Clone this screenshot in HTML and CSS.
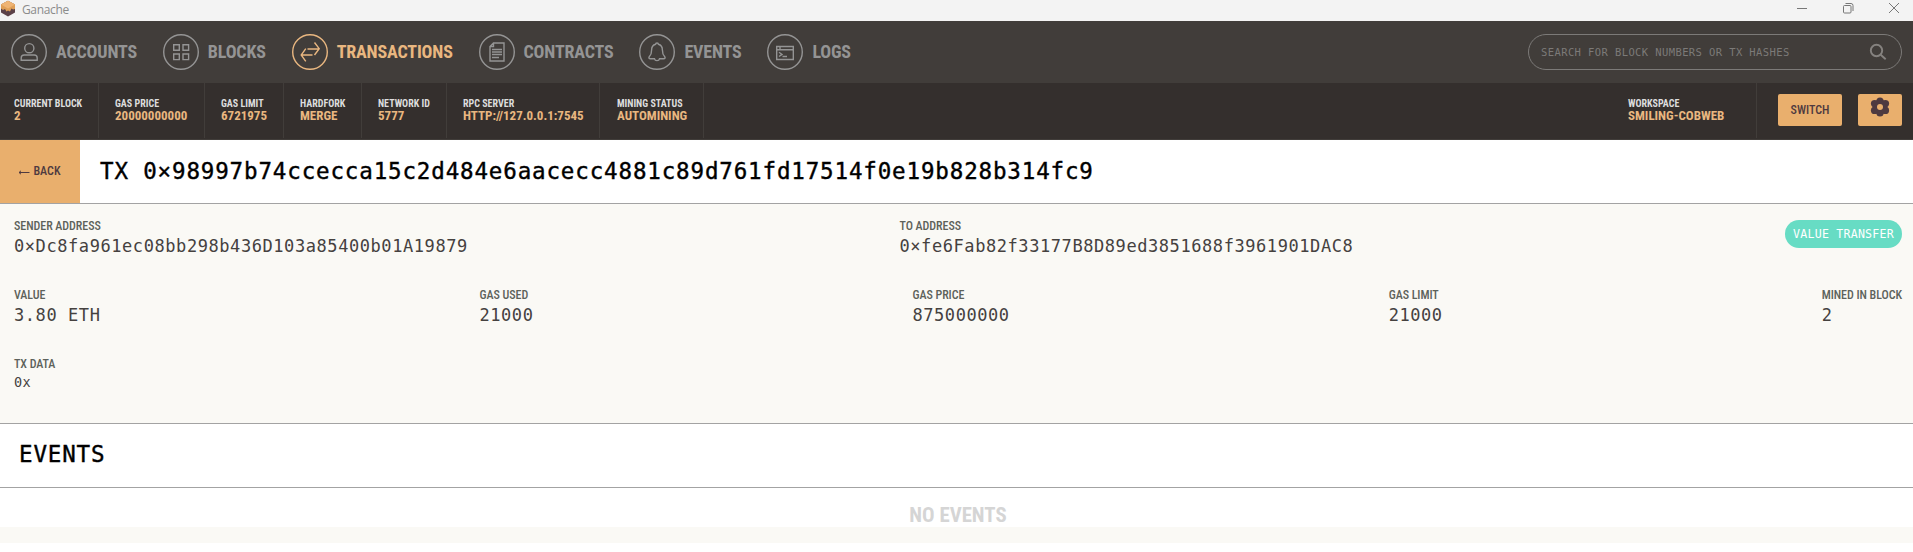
FILE: index.html
```
<!DOCTYPE html>
<html lang="en">
<head>
<meta charset="utf-8">
<title>Ganache</title>
<link rel="stylesheet" href="styles.css">
</head>
<body>
<header class="titlebar">
  <svg class="app-icon" width="16" height="17" viewBox="0 0 16 17"><path d="M8 .8 15 4.600v8L8 16.600 1 12.600v-8z" fill="#5b4148"/><path d="M8 .8 15 4.600V9l-2 .5L11.500 8.500 10 11.500 8 10.500 6.500 11.500 5 9 3 10 1 8.500V4.600z" fill="#e0a058"/><path d="M8 .8 15 4.600 8 8.500 1 4.600z" fill="#efb474"/></svg>
  <span class="app-name">Ganache</span>
  <div class="window-controls">
    <svg width="12" height="12" viewBox="0 0 12 12"><path d="M1 6.500h10"/></svg>
    <svg width="12" height="12" viewBox="0 0 12 12"><rect x="1.500" y="3.500" width="7.500" height="7.500" rx="1"/><path d="M3.500 1.500H9a2 2 0 0 1 2 2V9"/></svg>
    <svg width="12" height="12" viewBox="0 0 12 12"><path d="m1 1 10 10M11 1 1 11"/></svg>
  </div>
</header>
<nav class="nav">
  <a class="nav-item"><svg class="nav-icon" viewBox="0 0 36 36"><circle cx="18" cy="18" r="17.300"/><circle cx="18.300" cy="14.200" r="4.600"/><path d="M10.200 26.300v-2.300a3 3 0 0 1 3-3h10a3 3 0 0 1 3 3v2.300z"/></svg><span class="nav-label">ACCOUNTS</span></a>
  <a class="nav-item"><svg class="nav-icon" viewBox="0 0 36 36"><circle cx="18" cy="18" r="17.300"/><path d="M10.700 10.700h5.600v5.600h-5.600zM20 10.700h5.600v5.600H20zM10.700 20h5.600v5.600h-5.600zM20 20h5.600v5.600H20z"/></svg><span class="nav-label">BLOCKS</span></a>
  <a class="nav-item active"><svg class="nav-icon" viewBox="0 0 36 36"><circle cx="18" cy="18" r="17.300"/><path d="M15.500 15h11M22.500 8.500l4.700 6.200-4.700 6.300M20.500 21h-11M13.800 14.700 9.200 21l4.600 6.300"/></svg><span class="nav-label">TRANSACTIONS</span></a>
  <a class="nav-item"><svg class="nav-icon" viewBox="0 0 36 36"><circle cx="18" cy="18" r="17.300"/><path d="M14.500 9H25v18H11V12.500zM14.500 9v3.500H11M13 15.500h10M13 18h10M13 20.500h10M13 23.500h7"/></svg><span class="nav-label">CONTRACTS</span></a>
  <a class="nav-item"><svg class="nav-icon" viewBox="0 0 36 36"><circle cx="18" cy="18" r="17.300"/><path d="M16.600 10.300c0-1.700 2.800-1.700 2.800 0 3 .8 4 3.200 4 5.700 0 3.500.6 5 2.200 6.500 1 1.200.4 2.300-1 2.300h-4.100c-.6 2.400-4.400 2.400-5 0h-4.100c-1.400 0-2-1.100-1-2.300 1.600-1.500 2.200-3 2.200-6.500 0-2.500 1-4.900 4-5.700z"/></svg><span class="nav-label">EVENTS</span></a>
  <a class="nav-item"><svg class="nav-icon" viewBox="0 0 36 36"><circle cx="18" cy="18" r="17.300"/><path d="M9.700 12.500h16.600v13H9.700zM9.700 15.800h16.600M12 18.300l3 2.100-3 2.100M15.500 22.500h4.500M13 12.500v3.300"/></svg><span class="nav-label">LOGS</span></a>
  <div class="search"><span class="search-hint">SEARCH FOR BLOCK NUMBERS OR TX HASHES</span><svg width="18" height="18" viewBox="0 0 18 18"><circle cx="7.500" cy="7.500" r="5.700"/><path d="m11.700 11.700 5 4.500"/></svg></div>
</nav>
<section class="status">
  <div class="stat s1"><b>CURRENT BLOCK</b><i>2</i></div>
  <div class="stat s2"><b>GAS PRICE</b><i>20000000000</i></div>
  <div class="stat s3"><b>GAS LIMIT</b><i>6721975</i></div>
  <div class="stat s4"><b>HARDFORK</b><i>MERGE</i></div>
  <div class="stat s5"><b>NETWORK ID</b><i>5777</i></div>
  <div class="stat s6"><b>RPC SERVER</b><i>HTTP://127.0.0.1:7545</i></div>
  <div class="stat s7"><b>MINING STATUS</b><i>AUTOMINING</i></div>
  <div class="stat workspace"><b>WORKSPACE</b><i>SMILING-COBWEB</i></div>
  <div class="actions">
    <button class="btn switch">SWITCH</button>
    <button class="btn gear"><svg width="20" height="20" viewBox="0 0 20 20"><g fill="#4e3a40"><circle cx="10" cy="10" r="7.500"/><circle cx="10" cy="4" r="3.600"/><circle cx="10" cy="16" r="3.600"/><circle cx="4.600" cy="6.600" r="3.700"/><circle cx="15.400" cy="6.600" r="3.700"/><circle cx="4.600" cy="13.400" r="3.700"/><circle cx="15.400" cy="13.400" r="3.700"/></g><circle cx="10" cy="10" r="3" fill="#e9af6d"/></svg></button>
  </div>
</section>
<main class="page">
  <div class="tx-head">
    <button class="back"><svg width="12" height="8" viewBox="0 0 12 8"><path d="M11.500 5.500H1M3 3.800 1 5.500 3 7.200"/></svg><span>BACK</span></button>
    <h1 class="title">TX 0×98997b74ccecca15c2d484e6aacecc4881c89d761fd17514f0e19b828b314fc9</h1>
  </div>
  <div class="details">
    <div class="row">
      <div class="field sender"><span class="label">SENDER ADDRESS</span><span class="value">0×Dc8fa961ec08bb298b436D103a85400b01A19879</span></div>
      <div class="field"><span class="label">TO ADDRESS</span><span class="value">0×fe6Fab82f33177B8D89ed3851688f3961901DAC8</span></div>
      <span class="tag">VALUE TRANSFER</span>
    </div>
    <div class="row spread">
      <div class="field"><span class="label">VALUE</span><span class="value">3.80 ETH</span></div>
      <div class="field"><span class="label">GAS USED</span><span class="value">21000</span></div>
      <div class="field"><span class="label">GAS PRICE</span><span class="value">875000000</span></div>
      <div class="field"><span class="label">GAS LIMIT</span><span class="value">21000</span></div>
      <div class="field"><span class="label">MINED IN BLOCK</span><span class="value">2</span></div>
    </div>
    <div class="row"><div class="field"><span class="label">TX DATA</span><span class="value small">0x</span></div></div>
  </div>
  <h2 class="events-head title">EVENTS</h2>
  <div class="empty">NO EVENTS</div>
  <div class="page-end"></div>
</main>
</body>
</html>
```
FILE: styles.css
```
* { box-sizing: border-box; }
body { margin: 0; height: 552px; overflow: hidden; background: #fff; font-family: "Roboto Condensed", Roboto, sans-serif; font-stretch: 75%; }
button { border: 0; padding: 0; font: inherit; font-stretch: 75%; }
.titlebar { display: flex; height: 21px; background: #f3f3f3; padding-right: 13px; }
.app-icon { display: block; }
.app-name { margin: 2px 0 0 6px; font: 12px/16px "Open Sans", sans-serif; letter-spacing: -.35px; color: #8b8b8b; }
.window-controls { margin-left: auto; display: flex; gap: 34px; padding-top: 2px; }
.window-controls svg { fill: none; stroke: #777; stroke-width: 1; }
.nav { display: flex; align-items: center; height: 62px; background: #413d3a; padding: 0 11px; }
.nav-item { display: flex; align-items: center; color: #949494; margin-right: 25.800px; }
.nav-item.active { color: #e9b780; }
.nav-icon { width: 36px; height: 36px; fill: none; stroke: currentColor; stroke-width: 1.4; }
.nav-label { margin-left: 9px; font-size: 18px; font-weight: 700; line-height: 24px; letter-spacing: -.16px; white-space: nowrap; }
.search { margin-left: auto; width: 374px; height: 36px; border: 1px solid #7c7a78; border-radius: 18px; display: flex; align-items: center; justify-content: space-between; padding: 0 14px 0 12px; color: #7c7a78; }
.search svg { fill: none; stroke: #85827f; stroke-width: 1.9; }
.search-hint { font: 10.5px/16px "DejaVu Sans Mono", monospace; letter-spacing: .4px; }
.status { display: flex; height: 57px; background: #342f2d; border-bottom: 1px solid #413d3a; padding-right: 11px; }
.stat { height: 55px; border-right: 1px solid #413d3a; padding: 14.500px 16px 0; white-space: nowrap; }
.stat b { display: block; font-size: 10px; line-height: 12px; color: #ddd; }
.stat i { display: block; font-size: 13px; line-height: 12px; font-style: normal; font-weight: 700; color: #e9b780; }
.s1 { padding-left: 14px; width: 99px; }
.s2 { width: 106px; }
.s3 { width: 79px; }
.s4 { width: 78px; }
.s5 { width: 85px; }
.s6 { width: 153px; }
.s7 { width: 104px; padding-left: 17px; }
.workspace { margin-left: auto; width: 145px; }
.actions { display: flex; gap: 16px; padding: 11px 0 0 21px; }
.btn { height: 32px; background: #e9af6d; border-radius: 2px; color: #4e3a40; }
.switch { width: 64px; font-size: 12px; font-weight: 500; }
.gear { width: 44px; display: flex; justify-content: center; padding-top: 3px; }
.tx-head { display: flex; height: 64px; border-bottom: 1px solid #a3a3a3; }
.back { width: 80px; background: #e9af6d; color: #4e3a40; display: flex; align-items: center; justify-content: center; gap: 3px; font-size: 12px; font-weight: 500; padding: 0 1px 2px 0; }
.back svg { fill: none; stroke: #4e3a40; stroke-width: 1; }
.title { margin: 0; font: 400 22.500px/62px "DejaVu Sans Mono", monospace; letter-spacing: .856px; -webkit-text-stroke: .4px #000; color: #000; white-space: nowrap; }
.tx-head .title { padding-left: 20px; }
.details { height: 219px; background: #faf9f5; padding: 16px 11px 0 14px; }
.row { display: flex; height: 69px; }
.spread { justify-content: space-between; }
.field { display: flex; flex-direction: column; align-items: flex-start; white-space: nowrap; }
.sender { width: 885.500px; }
.label { font-size: 12px; line-height: 12px; font-weight: 500; letter-spacing: -.05px; color: #5d625b; }
.value { font: 17px/28px "DejaVu Sans Mono", monospace; letter-spacing: .57px; color: #45413f; }
.small { font-size: 13.5px; line-height: 24px; letter-spacing: .3px; }
.tag { margin-left: auto; width: 117px; height: 28px; border-radius: 14px; background: #67dcc4; color: #fff; text-align: center; font: 11.600px/28px "DejaVu Sans Mono", monospace; letter-spacing: .22px; }
.events-head { height: 65px; border: solid #a3a3a3; border-width: 1px 0; padding-left: 19px; line-height: 60px; }
.empty { height: 39px; padding: 16px 0 0 3px; text-align: center; font-size: 20.800px; line-height: 23px; font-weight: 700; color: #d5d5d5; }
.page-end { height: 16px; background: #faf9f5; }
```
